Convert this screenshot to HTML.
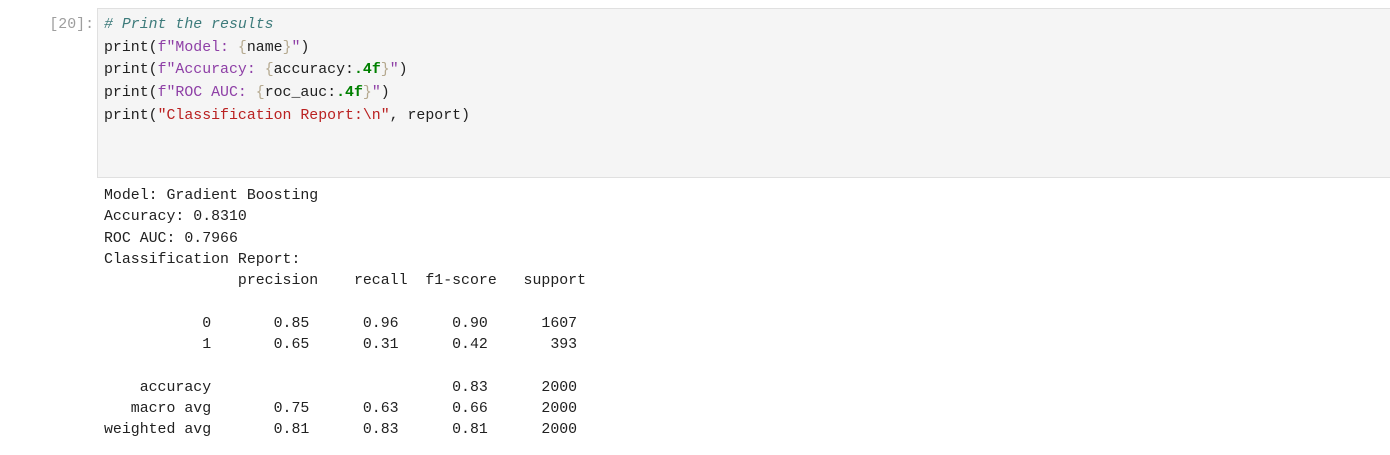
<!DOCTYPE html>
<html><head><meta charset="utf-8"><style>
body{margin:0;background:#fff;width:1390px;height:455px;overflow:hidden;font-family:"Liberation Mono",monospace;font-size:14.88px;}
.prompt{position:absolute;left:34px;top:14px;width:60px;text-align:right;color:#9e9e9e;line-height:22.7px;}
.box{position:absolute;left:97px;top:8px;width:1300px;height:170px;background:#f5f5f5;border:1px solid #e0e0e0;box-sizing:border-box;}
pre{margin:0;font:inherit;line-height:21.3px;position:absolute;left:104px;color:#212121;}
.c{color:#3d7b7b;font-style:italic}
.s{color:#ba2121}
.f{color:#8e3fa6}
.b{color:#b5a98f}
.n{color:#008000;font-weight:bold}
</style></head><body>
<div class="prompt">[20]:</div>
<div class="box"></div>
<pre style="top:14px;line-height:22.7px"><span class="c"># Print the results</span>
print(<span class="f">f"Model: </span><span class="b">{</span>name<span class="b">}</span><span class="f">"</span>)
print(<span class="f">f"Accuracy: </span><span class="b">{</span>accuracy:<span class="n">.4f</span><span class="b">}</span><span class="f">"</span>)
print(<span class="f">f"ROC AUC: </span><span class="b">{</span>roc_auc:<span class="n">.4f</span><span class="b">}</span><span class="f">"</span>)
print(<span class="s">"Classification Report:\n"</span>, report)</pre>
<pre style="top:186px">Model: Gradient Boosting
Accuracy: 0.8310
ROC AUC: 0.7966
Classification Report:
               precision    recall  f1-score   support

           0       0.85      0.96      0.90      1607
           1       0.65      0.31      0.42       393

    accuracy                           0.83      2000
   macro avg       0.75      0.63      0.66      2000
weighted avg       0.81      0.83      0.81      2000</pre>
</body></html>
